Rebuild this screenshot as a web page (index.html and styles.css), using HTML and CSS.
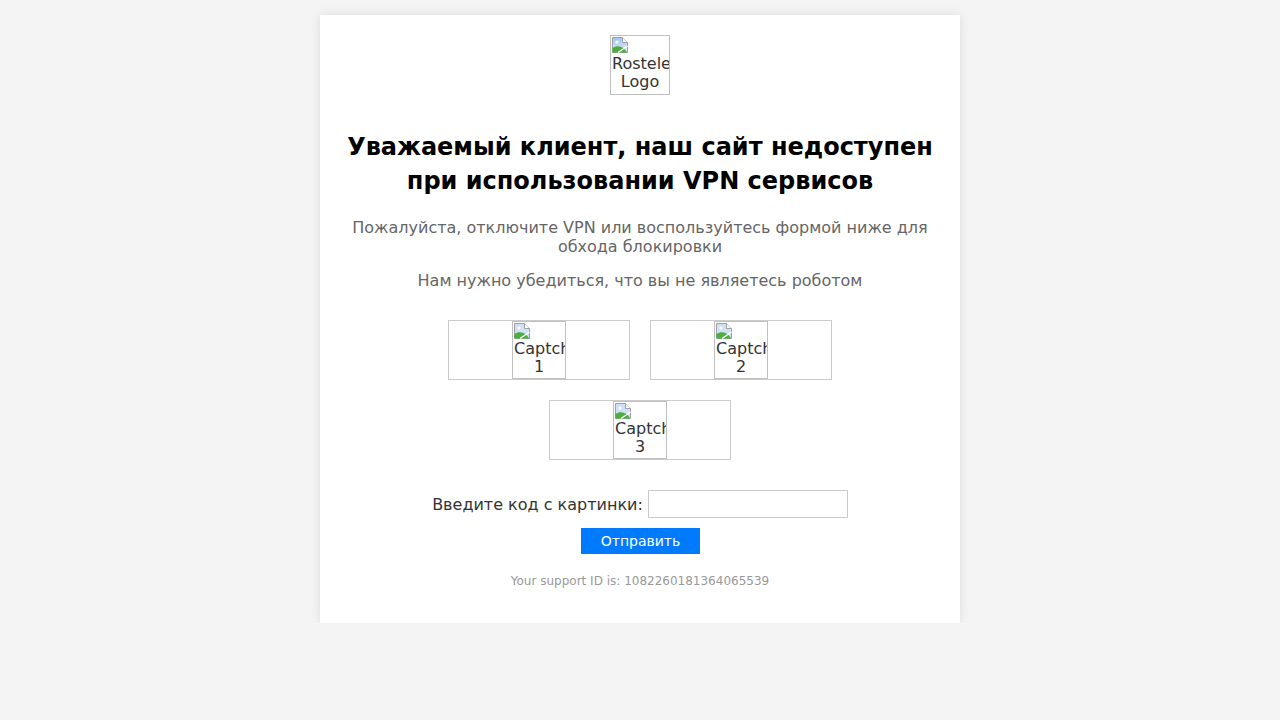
FILE: index.html
```html
<!DOCTYPE html>
<html lang="ru">
<head>
<meta charset="utf-8">
<title>VPN</title>
<link rel="stylesheet" href="styles.css">
</head>
<body>
<div class="card">
  <div class="logo-wrap">
    <div class="broken logo">
      <svg class="bicon" width="16" height="16" viewBox="0 0 16 16"><defs><linearGradient id="sky" x1="0" y1="0" x2="0" y2="1"><stop offset="0" stop-color="#9fc3f0"/><stop offset="1" stop-color="#e4efff"/></linearGradient></defs><path d="M0.5 0.5H10.5L15.5 5.5V15.5H0.5Z" fill="url(#sky)" stroke="#a0a0a0"/><path d="M10.5 0.5V5.5H15.5" fill="#fff" stroke="#a0a0a0"/><circle cx="5" cy="5" r="1.6" fill="#fff"/><path d="M0.5 15.5V11C4 8.5 8 8.5 12 11.5L15.5 15.5Z" fill="#4caf3c"/><path d="M6 15.5L15.5 9" stroke="#fff" stroke-width="1.4"/></svg>
      <span class="alt">Rostelecom Logo</span>
    </div>
  </div>
  <h1 class="title">Уважаемый клиент, наш сайт недоступен при использовании VPN сервисов</h1>
  <p class="text">Пожалуйста, отключите VPN или воспользуйтесь формой ниже для обхода блокировки</p>
  <p class="text">Нам нужно убедиться, что вы не являетесь роботом</p>
  <div class="captchas">
    <div class="cap"><div class="broken capimg"><svg class="bicon" width="16" height="16" viewBox="0 0 16 16"><path d="M0.5 0.5H10.5L15.5 5.5V15.5H0.5Z" fill="#cfe0f7" stroke="#a0a0a0"/><path d="M10.5 0.5V5.5H15.5" fill="#fff" stroke="#a0a0a0"/><circle cx="5" cy="5" r="1.6" fill="#fff"/><path d="M0.5 15.5V11C4 8.5 8 8.5 12 11.5L15.5 15.5Z" fill="#4caf3c"/><path d="M6 15.5L15.5 9" stroke="#fff" stroke-width="1.4"/></svg><span class="alt">Captcha 1</span></div></div>
    <div class="cap"><div class="broken capimg"><svg class="bicon" width="16" height="16" viewBox="0 0 16 16"><path d="M0.5 0.5H10.5L15.5 5.5V15.5H0.5Z" fill="#cfe0f7" stroke="#a0a0a0"/><path d="M10.5 0.5V5.5H15.5" fill="#fff" stroke="#a0a0a0"/><circle cx="5" cy="5" r="1.6" fill="#fff"/><path d="M0.5 15.5V11C4 8.5 8 8.5 12 11.5L15.5 15.5Z" fill="#4caf3c"/><path d="M6 15.5L15.5 9" stroke="#fff" stroke-width="1.4"/></svg><span class="alt">Captcha 2</span></div></div>
    <div class="cap"><div class="broken capimg"><svg class="bicon" width="16" height="16" viewBox="0 0 16 16"><path d="M0.5 0.5H10.5L15.5 5.5V15.5H0.5Z" fill="#cfe0f7" stroke="#a0a0a0"/><path d="M10.5 0.5V5.5H15.5" fill="#fff" stroke="#a0a0a0"/><circle cx="5" cy="5" r="1.6" fill="#fff"/><path d="M0.5 15.5V11C4 8.5 8 8.5 12 11.5L15.5 15.5Z" fill="#4caf3c"/><path d="M6 15.5L15.5 9" stroke="#fff" stroke-width="1.4"/></svg><span class="alt">Captcha 3</span></div></div>
  </div>
  <form class="form">
    <div class="row">
      <label class="label" for="code">Введите код с картинки:</label>
      <input class="input" id="code" type="text">
    </div>
    <button class="btn" type="button">Отправить</button>
  </form>
  <p class="support">Your support ID is: 1082260181364065539</p>
</div>
</body>
</html>
```

FILE: styles.css
```css
html, body {
  margin: 0;
  padding: 0;
  background: #f4f4f4;
  font-family: "DejaVu Sans", Verdana, sans-serif;
  color: #333;
}
body {
  padding-top: 15px;
}
.card {
  width: 600px;
  margin: 0 auto;
  background: #fff;
  padding: 20px 20px 35px;
  box-shadow: 0 0 10px rgba(0, 0, 0, 0.1);
  text-align: center;
}
.logo-wrap {
  display: flex;
  justify-content: center;
}
.broken {
  box-sizing: border-box;
  border: 1px solid #c0c0c0;
  overflow: hidden;
  text-align: center;
  font-size: 16px;
  line-height: 18px;
  color: #333;
  padding: 1px;
}
.bicon {
  display: block;
}
.alt {
  display: block;
  margin-top: 2px;
  white-space: normal;
}
.capimg .alt {
  margin-top: 1px;
}
.logo {
  width: 60px;
  height: 60px;
}
.title {
  margin: 35px 0 20px;
  font-size: 24px;
  line-height: 34px;
  font-weight: bold;
  color: #000;
}
.text {
  margin: 15px 0;
  font-size: 16px;
  line-height: 19px;
  color: #666;
}
.title + .text {
  margin-top: 20px;
}
.captchas {
  width: 404px;
  margin: 30px auto 0;
  display: flex;
  flex-wrap: wrap;
  justify-content: center;
  gap: 20px;
}
.cap {
  box-sizing: border-box;
  width: 182px;
  height: 60px;
  border: 1px solid #ccc;
  display: flex;
  justify-content: center;
}
.capimg {
  width: 54px;
  height: 58px;
}
.form {
  margin-top: 30px;
  display: flex;
  flex-direction: column;
  align-items: center;
  gap: 10px;
}
.row {
  display: flex;
  align-items: center;
  gap: 5px;
}
.label {
  font-size: 16px;
  color: #333;
}
.input {
  box-sizing: border-box;
  width: 200px;
  height: 28px;
  border: 1px solid #ccc;
  margin: 0;
  padding: 4px;
  font-family: inherit;
}
.btn {
  box-sizing: border-box;
  width: 119px;
  height: 26px;
  background: #007bff;
  color: #fff;
  border: none;
  font-family: inherit;
  font-size: 14px;
  padding: 0;
  margin-left: 1px;
}
.support {
  margin: 20px 0 0;
  font-size: 12px;
  line-height: 14px;
  color: #999;
}
```
